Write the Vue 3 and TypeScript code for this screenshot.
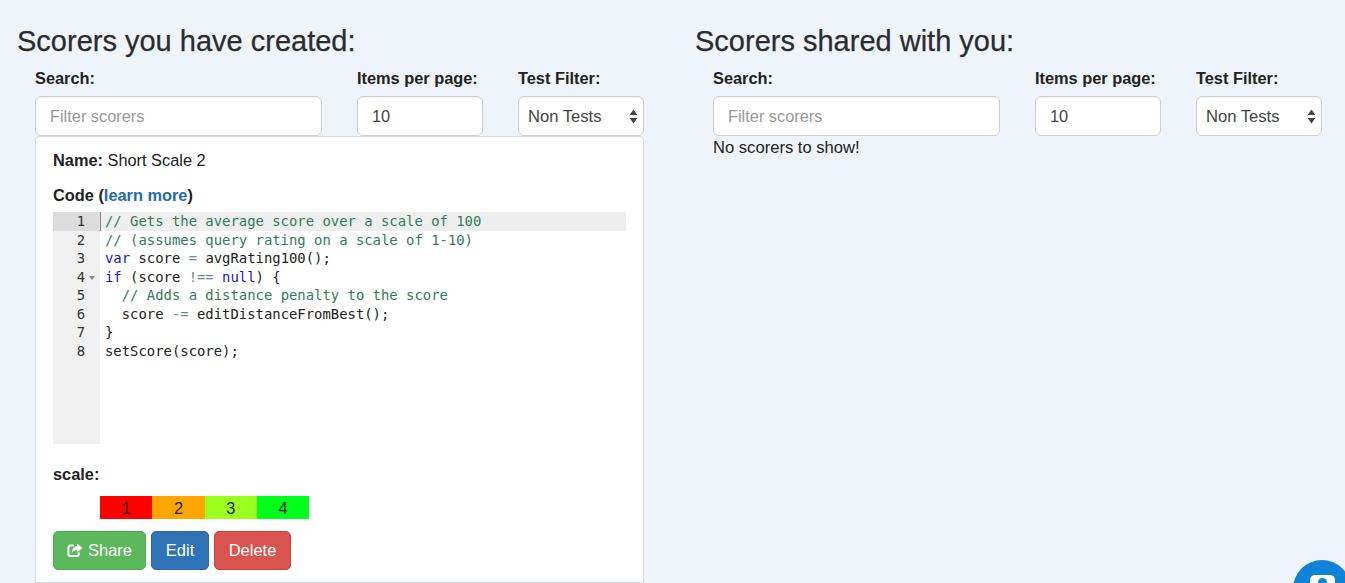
<script setup lang="ts">
interface Token { t: string; c?: string }
const lines: Token[][] = [
  [{ t: '// Gets the average score over a scale of 100', c: 'cm' }],
  [{ t: '// (assumes query rating on a scale of 1-10)', c: 'cm' }],
  [{ t: 'var', c: 'kw' }, { t: ' score ' }, { t: '=', c: 'op' }, { t: ' avgRating100();' }],
  [{ t: 'if', c: 'kw' }, { t: ' (score ' }, { t: '!==', c: 'op' }, { t: ' ' }, { t: 'null', c: 'kw' }, { t: ') {' }],
  [{ t: '  ' }, { t: '// Adds a distance penalty to the score', c: 'cm' }],
  [{ t: '  score ' }, { t: '-=', c: 'op' }, { t: ' editDistanceFromBest();' }],
  [{ t: '}' }],
  [{ t: 'setScore(score);' }]
]
const scale = [
  { n: 1, color: '#ff0000' },
  { n: 2, color: '#ffa500' },
  { n: 3, color: '#9aff1f' },
  { n: 4, color: '#00ff1a' }
]
</script>

<template>
  <div class="page">
    <section class="col">
      <h2>Scorers you have created:</h2>
      <div class="filters">
        <div class="field search">
          <label>Search:</label>
          <input class="ctl" type="text" placeholder="Filter scorers" />
        </div>
        <div class="field small">
          <label>Items per page:</label>
          <input class="ctl" type="text" value="10" />
        </div>
        <div class="field small">
          <label>Test Filter:</label>
          <div class="select-wrap">
            <select class="ctl sel"><option>Non Tests</option></select>
            <svg class="arrows" width="9" height="15" viewBox="0 0 8 14"><path d="M4 0.5L7.6 5.5H0.4Z M4 13.5L0.4 8.5H7.6Z" fill="#444" /></svg>
          </div>
        </div>
      </div>
      <div class="panel">
        <p class="name"><b>Name:</b> Short Scale 2</p>
        <p class="code-title"><b>Code (<a href="#">learn more</a>)</b></p>
        <div class="editor">
          <div class="gutter">
            <div v-for="(_, i) in lines" :key="i" class="num" :class="{ activeNum: i === 0 }">
              {{ i + 1 }}<svg v-if="i === 3" class="fold" width="6" height="4" viewBox="0 0 6 4"><path d="M0 0H6L3 4Z" fill="#888" /></svg>
            </div>
          </div>
          <div class="code">
            <div v-for="(line, i) in lines" :key="i" class="line" :class="{ activeLine: i === 0 }"><span v-for="(tok, j) in line" :key="j" :class="tok.c">{{ tok.t }}</span></div>
          </div>
        </div>
        <p class="scale-title"><b>scale:</b></p>
        <div class="scale">
          <div v-for="s in scale" :key="s.n" class="cell" :style="{ background: s.color }">{{ s.n }}</div>
        </div>
        <div class="buttons">
          <button class="btn green">
            <svg class="share" width="16" height="15" viewBox="0 0 16 15" fill="none">
              <path d="M7 2.6H3.4A2 2 0 0 0 1.4 4.6V11A2 2 0 0 0 3.4 13H9.8A2 2 0 0 0 11.8 11V9.4" stroke="#fff" stroke-width="2" />
              <path d="M10 0.6L15.6 5L10 9.4V7C7.6 7 6 7.8 5 10C5 6 7 3.4 10 3.2Z" fill="#fff" />
            </svg>
            Share
          </button>
          <button class="btn blue">Edit</button>
          <button class="btn red">Delete</button>
        </div>
      </div>
    </section>

    <section class="col">
      <h2>Scorers shared with you:</h2>
      <div class="filters">
        <div class="field search">
          <label>Search:</label>
          <input class="ctl" type="text" placeholder="Filter scorers" />
        </div>
        <div class="field small">
          <label>Items per page:</label>
          <input class="ctl" type="text" value="10" />
        </div>
        <div class="field small">
          <label>Test Filter:</label>
          <div class="select-wrap">
            <select class="ctl sel"><option>Non Tests</option></select>
            <svg class="arrows" width="9" height="15" viewBox="0 0 8 14"><path d="M4 0.5L7.6 5.5H0.4Z M4 13.5L0.4 8.5H7.6Z" fill="#444" /></svg>
          </div>
        </div>
      </div>
      <p class="empty">No scorers to show!</p>
    </section>

    <div class="chat"><div class="chat-icon"><span></span></div></div>
  </div>
</template>

<style>
html, body { margin: 0; background: #eff4fa; overflow: hidden; }
</style>

<style scoped>
.page {
  position: relative;
  display: grid;
  grid-template-columns: 678px 667px;
  height: 583px;
  overflow: hidden;
  font-family: "Liberation Sans", Arial, sans-serif;
  font-size: 16.35px;
  color: #222;
  background: #eff4fa;
}
.col { padding-top: 23px; }
h2 {
  margin: 0 0 0 17px;
  font-size: 29px;
  line-height: 36px;
  font-weight: 400;
  color: #2a2c2e;
  -webkit-text-stroke: 0.25px #2a2c2e;
}
.filters {
  display: flex;
  gap: 35px;
  margin: 9px 0 0 35px;
}
.field { display: flex; flex-direction: column; }
.search { width: 287px; }
.small { width: 126px; }
label {
  font-weight: 700;
  line-height: 21px;
  margin-bottom: 7px;
  white-space: nowrap;
}
.ctl {
  box-sizing: border-box;
  width: 100%;
  height: 40px;
  padding: 1px 14px 0;
  border: 1.5px solid #ccd0d4;
  border-radius: 6px;
  background: #fff;
  font: 16.35px "Liberation Sans", Arial, sans-serif;
  color: #444;
  outline: none;
  box-shadow: inset 0 1px 1px rgba(0, 0, 0, .05);
}
.ctl::placeholder { color: #999; opacity: 1; }
.select-wrap { position: relative; }
.sel { appearance: none; padding: 0 9px; font-size: 16.6px; }
.arrows { position: absolute; right: 6px; top: 13px; }
.panel {
  box-sizing: border-box;
  width: 609px;
  height: 447px;
  margin-left: 35px;
  padding: 0 17px;
  background: #fff;
  border: 1px solid #d8dde2;
  border-radius: 4px 4px 0 0;
}
p { margin: 0; line-height: 22px; }
.name { margin-top: 12px; }
.code-title { margin-top: 13px; }
a { color: #1e6bb3; text-decoration: none; }
.editor {
  display: flex;
  height: 232px;
  margin-top: 6px;
  font-family: "DejaVu Sans Mono", monospace;
  font-size: 13.9px;
  line-height: 18.55px;
}
.gutter { width: 47px; flex: none; background: #f0f0f0; }
.num { position: relative; padding-right: 15px; text-align: right; color: #333; }
.activeNum { background: #dcdcdc; }
.fold { position: absolute; right: 5px; top: 8px; }
.code { flex: 1; min-width: 0; }
.line { height: 18.55px; padding-left: 5px; white-space: pre; color: #222; }
.activeLine { background: #eeeeee; box-shadow: inset 6px 0 0 -5px #888; }
.cm { color: #2f7d5b; }
.kw { color: #1616c8; }
.op { color: #6b8b8f; }
.scale-title { margin-top: 19px; }
.scale { display: flex; margin: 11px 0 0 47px; }
.cell {
  width: 52.3px;
  height: 23px;
  line-height: 24px;
  text-align: center;
  color: #222;
}
.buttons { display: flex; gap: 5px; margin-top: 12px; }
.btn {
  box-sizing: border-box;
  display: flex;
  align-items: center;
  justify-content: center;
  gap: 5px;
  height: 39px;
  padding: 0;
  border: 1px solid;
  border-radius: 5px;
  font: 16.5px "Liberation Sans", Arial, sans-serif;
  color: #fff;
}
.green { width: 93px; background: #5cb85c; border-color: #4cae4c; }
.blue { width: 58px; background: #2e73b5; border-color: #2a68a5; }
.red { width: 77px; background: #d9534f; border-color: #d43f3a; }
.empty { margin: 0 0 0 35px; line-height: 23px; color: #222; font-size: 16.6px; }
.chat {
  position: absolute;
  left: 1293px;
  top: 560px;
  width: 58px;
  height: 58px;
  border-radius: 50%;
  background: #0f83d6;
}
.chat-icon {
  position: absolute;
  left: 17px;
  top: 15px;
  width: 25px;
  height: 24px;
  border-radius: 5px;
  background: #fff;
}
.chat-icon span {
  position: absolute;
  left: 8px;
  top: 3px;
  width: 9px;
  height: 9px;
  border-radius: 50%;
  background: #0f83d6;
}
</style>
